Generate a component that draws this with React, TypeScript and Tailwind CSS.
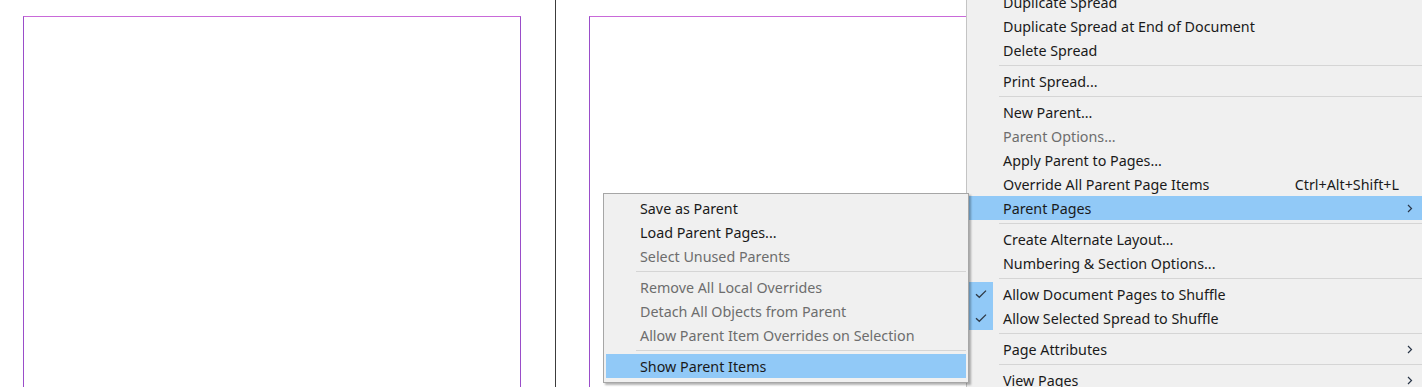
import React from "react";

type Item =
  | { sep: true }
  | {
      sep?: false;
      label: string;
      disabled?: boolean;
      active?: boolean;
      checked?: boolean;
      shortcut?: string;
      sub?: boolean;
    };

const mainItems: Item[] = [
  { label: "Duplicate Spread" },
  { label: "Duplicate Spread at End of Document" },
  { label: "Delete Spread" },
  { sep: true },
  { label: "Print Spread..." },
  { sep: true },
  { label: "New Parent..." },
  { label: "Parent Options...", disabled: true },
  { label: "Apply Parent to Pages..." },
  { label: "Override All Parent Page Items", shortcut: "Ctrl+Alt+Shift+L" },
  { label: "Parent Pages", active: true, sub: true },
  { sep: true },
  { label: "Create Alternate Layout..." },
  { label: "Numbering & Section Options..." },
  { sep: true },
  { label: "Allow Document Pages to Shuffle", checked: true },
  { label: "Allow Selected Spread to Shuffle", checked: true },
  { sep: true },
  { label: "Page Attributes", sub: true },
  { sep: true },
  { label: "View Pages", sub: true },
];

const subItems: Item[] = [
  { label: "Save as Parent" },
  { label: "Load Parent Pages..." },
  { label: "Select Unused Parents", disabled: true },
  { sep: true },
  { label: "Remove All Local Overrides", disabled: true },
  { label: "Detach All Objects from Parent", disabled: true },
  { label: "Allow Parent Item Overrides on Selection", disabled: true },
  { sep: true },
  { label: "Show Parent Items", active: true },
];

const Check = () => (
  <svg width="12" height="10" viewBox="0 0 12 10" fill="none">
    <path d="M1 5.2 L4.3 8.3 L11 1.6" stroke="#2f3a46" strokeWidth="1.3" />
  </svg>
);

const Chevron = () => (
  <svg width="6" height="9" viewBox="0 0 6 9" fill="none">
    <path d="M1 1 L4.5 4.5 L1 8" stroke="#2a3648" strokeWidth="1.2" />
  </svg>
);

const MenuRow = ({ item }: { item: Item }) => {
  if (item.sep) {
    return (
      <div className="h-[7px] flex items-center pl-[30px]">
        <div className="h-px w-full bg-[#d5d5d5]"></div>
      </div>
    );
  }

  return (
    <div
      className={`h-6 flex items-center whitespace-nowrap ${
        item.active ? "bg-[#91c9f7]" : ""
      } ${item.disabled ? "text-[#6d6d6d]" : "text-[#1a1a1a]"}`}
    >
      <div
        className={`w-6 h-6 flex items-center justify-center shrink-0 ${
          item.checked ? "bg-[#91c9f7]" : ""
        }`}
      >
        {item.checked && <Check />}
      </div>
      <div className="flex-1 pl-[10px] pt-px">{item.label}</div>
      {item.shortcut && <div className="pt-px">{item.shortcut}</div>}
      <div className="w-[26px] h-6 flex items-center pl-[8px] shrink-0">
        {item.sub && <Chevron />}
      </div>
    </div>
  );
};

export default function App() {
  return (
    <div
      className="relative w-[1422px] h-[387px] overflow-hidden bg-white text-[14.3px]"
      style={{ fontFamily: '"Noto Sans", "Open Sans", sans-serif' }}
    >
      {/* pasteboard with two pages */}
      <div className="flex h-full">
        <div className="w-[555px] h-full pl-[23px] pt-[16px]">
          <div className="w-[498px] h-[400px] border-t border-t-[#c96ad9] border-x border-x-[#9a4dc9]"></div>
        </div>
        <div className="w-px h-full bg-[#3c3c3c]"></div>
        <div className="flex-1 h-full pl-[33px] pt-[16px]">
          <div className="w-[500px] h-[400px] border-t border-t-[#c96ad9] border-l border-l-[#9a4dc9]"></div>
        </div>
      </div>

      {/* panel menu */}
      <div className="absolute left-[966px] top-[-13px] w-[462px] bg-[#f0f0f0] border border-[#c4c4c4] px-[2px] pt-[2px]">
        {mainItems.map((item, i) => (
          <MenuRow key={i} item={item} />
        ))}
      </div>

      {/* Parent Pages submenu */}
      <div className="absolute left-[603px] top-[193px] w-[366px] bg-[#f0f0f0] border border-[#a6a6a6] px-[2px] pt-[2px] pb-[4px] shadow-[2px_2px_2px_rgba(0,0,0,0.3)]">
        {subItems.map((item, i) => (
          <MenuRow key={i} item={item} />
        ))}
      </div>
    </div>
  );
}
